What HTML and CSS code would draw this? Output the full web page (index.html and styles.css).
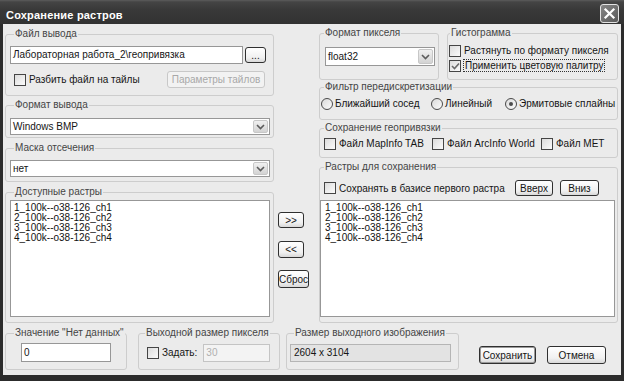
FILE: index.html
```html
<!DOCTYPE html>
<html lang="ru">

<head>
    <meta charset="UTF-8" />
    <title>Сохранение растров</title>
    <link rel="stylesheet" href="styles.css">
</head>

<body>
    <div class="window">
        <div class="titlebar">
            <span class="title">Сохранение растров</span>
            <span class="close">
                <svg width="13" height="13" viewBox="0 0 13 13"><path d="M2.5 2.5L10.5 10.5M10.5 2.5L2.5 10.5" stroke="#fff" stroke-width="2.2" stroke-linecap="square" /></svg>
            </span>
        </div>

        <div class="client">
            <div class="main">
                <!-- левая колонка -->
                <div class="col-left">
                    <fieldset class="group g-file">
                        <legend>Файл вывода</legend>
                        <div class="row">
                            <div class="edit edit-path">Лабораторная работа_2\геопривязка</div>
                            <button class="btn btn-dots">...</button>
                        </div>
                        <div class="row row-tiles">
                            <label class="check"><span class="box"></span>Разбить файл на тайлы</label>
                            <button class="btn btn-off btn-tiles">Параметры тайлов</button>
                        </div>
                    </fieldset>

                    <fieldset class="group g-format">
                        <legend>Формат вывода</legend>
                        <div class="combo">
                            <span class="combo-text">Windows BMP</span>
                            <span class="drop"><svg width="9" height="6" viewBox="0 0 9 6"><path d="M1 1l3.5 3.5L8 1" fill="none" stroke="#5c5c5c" stroke-width="1.6" /></svg></span>
                        </div>
                    </fieldset>

                    <fieldset class="group g-mask">
                        <legend>Маска отсечения</legend>
                        <div class="combo">
                            <span class="combo-text">нет</span>
                            <span class="drop"><svg width="9" height="6" viewBox="0 0 9 6"><path d="M1 1l3.5 3.5L8 1" fill="none" stroke="#5c5c5c" stroke-width="1.6" /></svg></span>
                        </div>
                    </fieldset>

                    <fieldset class="group g-avail">
                        <legend>Доступные растры</legend>
                        <ul class="list">
                            <li>1_100k--o38-126_ch1</li>
                            <li>2_100k--o38-126_ch2</li>
                            <li>3_100k--o38-126_ch3</li>
                            <li>4_100k--o38-126_ch4</li>
                        </ul>
                    </fieldset>
                </div>

                <!-- кнопки переноса -->
                <div class="col-mid">
                    <button class="btn btn-add">&gt;&gt;</button>
                    <button class="btn btn-del">&lt;&lt;</button>
                    <button class="btn btn-reset">Сброс</button>
                </div>

                <!-- правая колонка -->
                <div class="col-right">
                    <div class="pair">
                        <fieldset class="group g-pixel">
                            <legend>Формат пикселя</legend>
                            <div class="combo combo-tall">
                                <span class="combo-text">float32</span>
                                <span class="drop"><svg width="9" height="6" viewBox="0 0 9 6"><path d="M1 1l3.5 3.5L8 1" fill="none" stroke="#5c5c5c" stroke-width="1.6" /></svg></span>
                            </div>
                        </fieldset>
                        <fieldset class="group g-hist">
                            <legend>Гистограмма</legend>
                            <label class="check"><span class="box"></span>Растянуть по формату пикселя</label>
                            <label class="check check-2"><span class="box"><svg width="9" height="8" viewBox="0 0 9 8"><path d="M1 4l2.5 2.5L8 1.5" fill="none" stroke="#6a6a6a" stroke-width="1.6" /></svg></span><span class="focus">Применить цветовую палитру</span></label>
                        </fieldset>
                    </div>

                    <fieldset class="group g-filter">
                        <legend>Фильтр передискретизации</legend>
                        <div class="row">
                            <label class="radio r-near"><span class="dot"></span>Ближайший сосед</label>
                            <label class="radio r-lin"><span class="dot"></span>Линейный</label>
                            <label class="radio"><span class="dot on"></span>Эрмитовые сплайны</label>
                        </div>
                    </fieldset>

                    <fieldset class="group g-geo">
                        <legend>Сохранение геопривязки</legend>
                        <div class="row">
                            <label class="check c-tab"><span class="box"></span>Файл MapInfo TAB</label>
                            <label class="check c-world"><span class="box"></span>Файл ArcInfo World</label>
                            <label class="check"><span class="box"></span>Файл MET</label>
                        </div>
                    </fieldset>

                    <fieldset class="group g-save">
                        <legend>Растры для сохранения</legend>
                        <div class="row row-base">
                            <label class="check"><span class="box"></span>Сохранять в базисе первого растра</label>
                            <button class="btn btn-up">Вверх</button>
                            <button class="btn btn-down">Вниз</button>
                        </div>
                        <ul class="list list-right">
                            <li>1_100k--o38-126_ch1</li>
                            <li>2_100k--o38-126_ch2</li>
                            <li>3_100k--o38-126_ch3</li>
                            <li>4_100k--o38-126_ch4</li>
                        </ul>
                    </fieldset>
                </div>
            </div>

            <div class="bottom">
                <fieldset class="group g-nodata">
                    <legend>Значение "Нет данных"</legend>
                    <div class="row">
                        <div class="edit edit-nodata">0</div>
                    </div>
                </fieldset>
                <fieldset class="group g-cell">
                    <legend>Выходной размер пикселя</legend>
                    <div class="row">
                        <label class="check"><span class="box"></span>Задать:</label>
                        <div class="edit edit-off">30</div>
                    </div>
                </fieldset>
                <fieldset class="group g-size">
                    <legend>Размер выходного изображения</legend>
                    <div class="row">
                        <div class="edit edit-ro">2604 x 3104</div>
                    </div>
                </fieldset>
                <button class="btn btn-default btn-save">Сохранить</button>
                <button class="btn btn-cancel">Отмена</button>
            </div>
        </div>
    </div>
</body>

</html>
```

FILE: styles.css
```css
* {
    margin: 0;
    padding: 0;
    box-sizing: border-box;
}

body {
    width: 624px;
    height: 381px;
    overflow: hidden;
    font-family: "Liberation Sans", Arial, sans-serif;
    font-size: 10px;
    color: #151515;
}

.window {
    width: 624px;
    height: 381px;
    background: #2c2c2c;
    display: flex;
    flex-direction: column;
}

/* заголовок окна */
.titlebar {
    height: 24px;
    flex: none;
    display: flex;
    align-items: flex-start;
    justify-content: space-between;
    padding: 0 5px 0 6px;
    background: linear-gradient(#5c5c5c 0, #444 2px, #393939 40%, #323232 100%);
}

.title {
    margin-top: 6px;
    line-height: 18px;
    font-size: 11px;
    font-weight: bold;
    letter-spacing: 0.2px;
    color: #fff;
}

.close {
    margin-top: 4px;
    width: 19px;
    height: 19px;
    display: flex;
    align-items: center;
    justify-content: center;
    border: 1px solid #e2e2e2;
    border-radius: 3px;
    background: linear-gradient(135deg, #858585, #5a5a5a);
}

.client {
    flex: 1;
    margin: 0 3px 6px 3px;
    padding: 3px 3px 0 2px;
    background: #ebebeb;
}

.main {
    display: flex;
}

.col-left {
    width: 269px;
    padding-top: 1px;
    display: flex;
    flex-direction: column;
}

.col-mid {
    width: 45px;
    padding: 185px 0 0 4px;
    display: flex;
    flex-direction: column;
    align-items: flex-start;
}

.col-right {
    width: 299px;
    display: flex;
    flex-direction: column;
}

/* групповые рамки */
.group {
    border: 1px solid #cdcdcd;
    border-radius: 3px;
    min-width: 0;
}

.group > legend {
    padding: 0 1px;
    line-height: 12px;
    color: #454545;
}

.row {
    display: flex;
    align-items: center;
}

.g-file { height: 68px; padding: 6px 3px 0 4px; }
.g-file > legend { margin-left: 4px; }
.g-file .row { height: 18px; }
.g-file .row-tiles { height: 17px; margin-top: 7px; justify-content: space-between; }
.row-tiles .check { margin-left: 4px; }

.g-format { height: 39px; margin-top: 3px; padding: 7px 3px 0 4px; }
.g-format > legend { margin-left: 4px; }

.g-mask { height: 40px; margin-top: 4px; padding: 6px 3px 0 4px; }
.g-mask > legend { margin-left: 4px; }

.g-avail { height: 137px; margin-top: 4px; padding: 2px 3px 0 4px; }
.g-avail > legend { margin-left: 4px; }

.pair {
    display: flex;
    gap: 8px;
}

.g-pixel { width: 120px; height: 53px; padding: 8px 3px 0 5px; }
.g-pixel > legend { margin-left: -1px; }

.g-hist { width: 171px; height: 53px; padding: 5px 0 0 1px; }
.g-hist > legend { margin-left: 1px; }
.g-hist .check { height: 13px; }
.g-hist .check-2 { margin-top: 2px; }

.g-filter { height: 39px; margin-top: 1px; padding: 4px 0 0 1px; }
.g-filter > legend { margin-left: 3px; }
.g-filter .row { height: 13px; }

.g-geo { height: 36px; margin-top: 2px; padding: 3px 0 0 4px; }
.g-geo > legend { margin-left: 0; }
.g-geo .row { height: 13px; }

.g-save { height: 162px; margin-top: 3px; padding: 7px 2px 0 0; }
.g-save > legend { margin-left: 4px; }
.row-base { height: 16px; padding-left: 4px; }
.row-base .check { flex: 1; }

.bottom {
    margin-top: 4px;
    display: flex;
    align-items: flex-start;
}

.bottom .group { height: 43px; padding-top: 4px; }
.bottom .row { height: 19px; }

.g-nodata { width: 122px; padding-left: 15px; }
.g-nodata > legend { margin-left: -7px; }

.g-cell { width: 142px; margin-left: 11px; padding-left: 8px; }
.g-cell > legend { margin-left: -2px; }

.g-size { width: 173px; margin-left: 6px; padding-left: 3px; }
.g-size > legend { margin-left: 4px; }

/* поля ввода */
.edit {
    height: 18px;
    line-height: 16px;
    padding: 0 2px;
    border: 1px solid #979797;
    background: #fff;
    white-space: nowrap;
    overflow: hidden;
}

.edit-path { width: 233px; }
.edit-nodata { width: 90px; height: 19px; line-height: 17px; }
.edit-off { width: 67px; margin-left: 6px; color: #b0b0b0; border-color: #c4c4c4; background: #f3f3f3; }
.edit-ro { width: 161px; background: #e3e3e3; border-color: #b5b5b5; padding-left: 3px; }

.combo {
    height: 17px;
    display: flex;
    align-items: center;
    border: 1px solid #979797;
    background: #fff;
}

.combo-tall { width: 110px; height: 19px; }

.combo-text {
    flex: 1;
    padding-left: 2px;
}

.drop {
    width: 15px;
    height: calc(100% - 2px);
    margin-right: 1px;
    display: flex;
    align-items: center;
    justify-content: center;
    border: 1px solid #c7c7c7;
    border-radius: 2px;
    background: linear-gradient(#f0f0f0, #d3d3d3);
}

.list {
    list-style: none;
    height: 117px;
    padding: 2px 3px;
    border: 1px solid #979797;
    background: #fff;
    color: #111;
}

.list li {
    line-height: 10px;
}

.list-right {
    margin-top: 4px;
    padding-left: 4px;
}

/* флажки и переключатели */
.check {
    display: flex;
    align-items: center;
    white-space: nowrap;
}

.box {
    width: 12px;
    height: 12px;
    flex: none;
    margin-right: 3px;
    display: flex;
    align-items: center;
    justify-content: center;
    border: 1px solid #454545;
    background: linear-gradient(135deg, #dcdcdc, #fbfbfb);
}

.focus {
    outline: 1px dotted #333;
    padding: 0 1px;
}

.c-tab { width: 108px; }
.c-world { width: 109px; }

.radio {
    display: flex;
    align-items: center;
    white-space: nowrap;
}

.r-near { width: 110px; }
.r-lin { width: 74px; }

.dot {
    width: 12px;
    height: 12px;
    flex: none;
    margin-right: 2px;
    border: 1px solid #4a4a4a;
    border-radius: 50%;
    background: linear-gradient(135deg, #dadada, #fcfcfc);
    display: flex;
    align-items: center;
    justify-content: center;
}

.dot.on::after {
    content: "";
    width: 4px;
    height: 4px;
    border-radius: 50%;
    background: #4c4c4c;
}

/* кнопки */
.btn {
    font-family: inherit;
    font-size: 10px;
    color: #151515;
    border: 1px solid #303030;
    border-radius: 3px;
    background: linear-gradient(#ffffff, #f0f0f0 70%, #d8d8d8);
    display: flex;
    align-items: center;
    justify-content: center;
    white-space: nowrap;
}

.btn-off {
    color: #a8a8a8;
    border-color: #c8c8c8;
    background: #f2f2f2;
}

.btn-dots { width: 21px; height: 16px; margin-left: 2px; }
.btn-tiles { width: 98px; height: 17px; margin-right: 5px; }

.btn-add { width: 26px; height: 16px; }
.btn-del { width: 26px; height: 17px; margin-top: 13px; }
.btn-reset { width: 31px; height: 18px; margin-top: 12px; }

.btn-up { width: 38px; height: 16px; }
.btn-down { width: 39px; height: 16px; margin: 0 16px 0 7px; }

.btn-save { width: 57px; height: 18px; margin: 19px 0 0 20px; }
.btn-cancel { width: 59px; height: 18px; margin: 19px 0 0 11px; }

.btn-default {
    box-shadow: inset 0 0 0 1px #9a9a9a;
}
```
